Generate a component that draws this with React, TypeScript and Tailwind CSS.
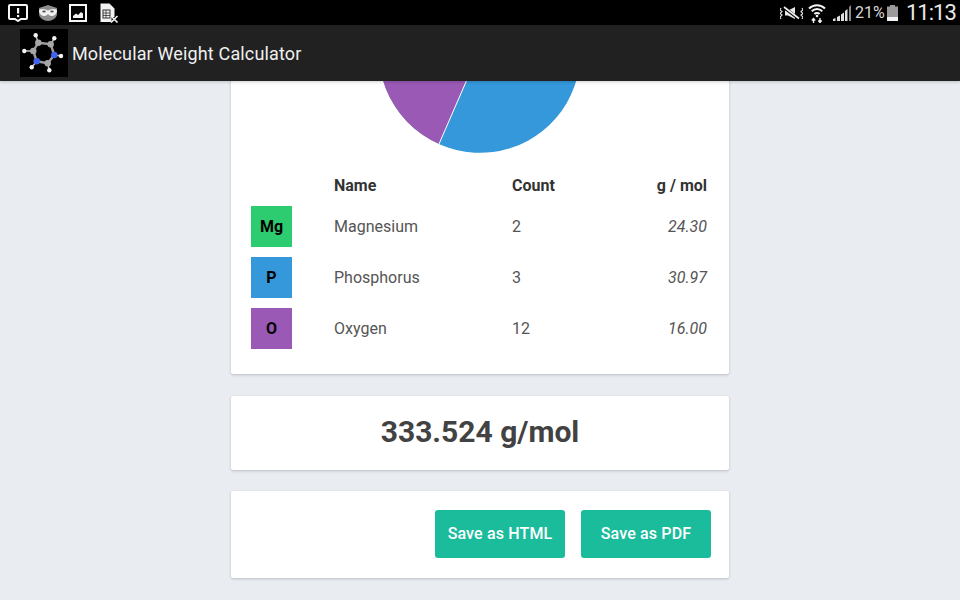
import React from "react";

const elements = [
	{ symbol: "Mg", name: "Magnesium", count: "2", weight: "24.30", color: "bg-[#2ecc71]" },
	{ symbol: "P", name: "Phosphorus", count: "3", weight: "30.97", color: "bg-[#3498db]" },
	{ symbol: "O", name: "Oxygen", count: "12", weight: "16.00", color: "bg-[#9b59b6]" },
];

const ringAtoms = [
	{ x: 18.3, y: 13.7, fill: "#a6a6a6" },
	{ x: 30.7, y: 15.3, fill: "#a6a6a6" },
	{ x: 34.3, y: 26, fill: "#3f63f0" },
	{ x: 27.7, y: 34.3, fill: "#a6a6a6" },
	{ x: 16.7, y: 32.3, fill: "#3f63f0" },
	{ x: 13.3, y: 22, fill: "#a6a6a6" },
];

// one hydrogen per ring atom, same order
const hydrogens = [
	{ x: 15.7, y: 6.3 },
	{ x: 34.3, y: 9.3 },
	{ x: 41, y: 27 },
	{ x: 29.3, y: 41.3 },
	{ x: 11.7, y: 38.3 },
	{ x: 4.3, y: 22 },
];

function MoleculeLogo() {
	return (
		<svg width="48" height="48" viewBox="0 0 48 48" className="bg-black shrink-0">
			{ringAtoms.map((a, i) => {
				const next = ringAtoms[(i + 1) % ringAtoms.length];
				return <line key={i} x1={a.x} y1={a.y} x2={next.x} y2={next.y} stroke="#9c9c9c" strokeWidth="2.4" />;
			})}
			{hydrogens.map((h, i) => (
				<line key={i} x1={h.x} y1={h.y} x2={ringAtoms[i].x} y2={ringAtoms[i].y} stroke="#c4c4c4" strokeWidth="1.5" />
			))}
			{ringAtoms.map((a, i) => (
				<circle key={i} cx={a.x} cy={a.y} r="3.2" fill={a.fill} />
			))}
			{hydrogens.map((h, i) => (
				<circle key={i} cx={h.x} cy={h.y} r="2.2" fill="#f4f4f4" />
			))}
		</svg>
	);
}

function StatusLeftIcons() {
	return (
		<div className="flex items-center">
			{/* Alert message */}
			<svg width="20" height="18" viewBox="0 0 20 18" className="ml-[8px]">
				<path d="M2 1h16a1 1 0 0 1 1 1v12a1 1 0 0 1-1 1h-5l-3 2-3-2H2a1 1 0 0 1-1-1V2a1 1 0 0 1 1-1z" fill="none" stroke="#f6f6f6" strokeWidth="2" />
				<rect x="9" y="4" width="2.2" height="5.5" fill="#f6f6f6" />
				<rect x="9" y="11" width="2.2" height="2.2" fill="#f6f6f6" />
			</svg>
			{/* Mask */}
			<svg width="20" height="18" viewBox="0 0 20 18" className="ml-[10px]">
				<path d="M1 4 10 1l9 3v6c0 4-5 7-9 7s-9-3-9-7z" fill="#8d8d8d" />
				<path d="M1 6c3-1.5 6-1 9 .5 3-1.500 6-2 9-.5 0 4-3 6-5.500 6-1.500 0-2.500-1-3.500-2-1 1-2 2-3.500 2C4 12 1 10 1 6z" fill="#f0f0f0" />
				<ellipse cx="6" cy="7.5" rx="1.8" ry="1" fill="#555" />
				<ellipse cx="14" cy="7.5" rx="1.8" ry="1" fill="#555" />
			</svg>
			{/* Picture */}
			<svg width="18" height="18" viewBox="0 0 18 18" className="ml-[11px]">
				<rect x="1" y="1" width="16" height="16" fill="none" stroke="#f6f6f6" strokeWidth="2" />
				<path d="M4 14v-2l3-2.500 2 1.500 3-3 2 1.500V14z" fill="#f2f2f2" />
			</svg>
			{/* Spreadsheet document with cross */}
			<svg width="19" height="20" viewBox="0 0 19 20" className="ml-[13px]">
				<path d="M.5.5h9l5 5V14h-3v5h-11z" fill="#f2f2f2" />
				<rect x="3" y="7" width="7" height="8" fill="none" stroke="#333" strokeWidth="1" />
				<path d="M3 10h7M3 12.500h7M6 7v8" stroke="#333" strokeWidth="0.8" />
				<path d="M11 13l6.500 6.500M17.500 13 11 19.500" stroke="#f2f2f2" strokeWidth="1.6" />
			</svg>
		</div>
	);
}

function StatusRight() {
	return (
		<div className="flex items-center">
			{/* Vibrate and mute */}
			<svg width="23" height="14" viewBox="0 0 23 14" className="mr-[5px]">
				<path d="M1 2 0 4l2 1.500L0 7.500 2 9 0 11l1 2M22 2l1 2-2 1.500 2 2L21 9l2 2-1 2" fill="none" stroke="#e0e0e0" strokeWidth="1.2" />
				<path d="M5 4.500h3L15 1v12L8 9.500H5z" fill="#e8e8e8" />
				<path d="M4 1.500 19 13" stroke="#000" strokeWidth="3" />
				<path d="M4 1 19 12.500" stroke="#f0f0f0" strokeWidth="1.6" />
			</svg>
			{/* Wifi with transfer arrows */}
			<svg width="18" height="21" viewBox="0 0 18 21" className="mr-[7px]">
				<path d="M1 6.500c4.500-4.500 11.500-4.500 16 0M3.700 9.300c3-3 7.600-3 10.600 0M6.400 12c1.500-1.500 3.700-1.500 5.200 0" fill="none" stroke="#f2f2f2" strokeWidth="2" />
				<circle cx="9" cy="14" r="1.3" fill="#f2f2f2" />
				<path d="M5.500 21v-4M3.800 18.500l1.700-2 1.700 2M12 16v4M10.300 18.500l1.700 2 1.700-2" fill="none" stroke="#f2f2f2" strokeWidth="1.4" />
			</svg>
			{/* Signal bars */}
			<svg width="18" height="16" viewBox="0 0 18 16" className="mr-[4px]">
				<path d="M0 16v-2l2.500-1v3z" fill="#e0e0e0" />
				<path d="M4 16v-4l3-1.500V16z" fill="#e0e0e0" />
				<path d="M8 16V9.500l3-2V16z" fill="#e0e0e0" />
				<path d="M12 16V6l2.500-2v12z" fill="#e0e0e0" />
				<path d="M16 16V2l2-2v16z" fill="#8a8a8a" />
			</svg>
			<span className="text-[16px] leading-none text-[#d8d8d8] w-[32px]">21%</span>
			{/* Battery */}
			<svg width="11" height="16" viewBox="0 0 11 16" className="mr-[8px]">
				<rect x="3" y="0" width="5" height="2" fill="#9a9a9a" />
				<rect x="0" y="1.5" width="11" height="10.5" fill="#9a9a9a" />
				<rect x="0" y="12" width="11" height="4" fill="#f2f2f2" />
			</svg>
			<span className="text-[22px] leading-none text-[#e8e8e8] tracking-[-1px] w-[50px] mr-[4px] mt-[1px]">11:13</span>
		</div>
	);
}

export default function App() {
	return (
		<div className="h-[600px] w-[960px] overflow-hidden flex flex-col bg-[#e9edf2] font-['Roboto',sans-serif]">
			{/* Status bar */}
			<div className="h-[25px] shrink-0 bg-black flex items-center justify-between">
				<StatusLeftIcons />
				<StatusRight />
			</div>

			{/* App bar */}
			<div className="relative z-10 h-[56px] shrink-0 bg-[#212121] flex items-center pl-[20px] gap-[4px] shadow-[0_1px_3px_rgba(0,0,0,0.2)]">
				<MoleculeLogo />
				<span className="text-[18px] text-[#f0f0f0] tracking-[0.15px]">Molecular Weight Calculator</span>
			</div>

			{/* Scrolled content */}
			<div className="flex-1 overflow-hidden">
				<div className="w-[498px] mx-auto -mt-[161px] flex flex-col gap-[21px]">
					<div className="bg-white rounded-[2px] shadow-[0_1px_3px_rgba(0,0,0,0.2)] pt-[31px] pb-[25px] mb-[1px] pl-[20px] pr-[22px]">
						<div className="flex justify-center mb-[21px]">
							<svg width="202" height="202" viewBox="0 0 202 202" className="block">
								<circle cx="101" cy="101" r="100" fill="#2ecc71" />
								<path d="M101 101 L61 193 A100 100 0 0 0 161 21 Z" fill="#3498db" />
								<path d="M101 101 L61 193 A100 100 0 0 1 10 60 Z" fill="#9b59b6" />
								<path d="M101 101 L61 193" stroke="#fff" strokeWidth="1" />
							</svg>
						</div>

						<div className="grid grid-cols-[83px_178px_1fr_auto] items-center text-[16px] text-[#333] font-bold h-[22px]">
							<span />
							<span>Name</span>
							<span>Count</span>
							<span>g / mol</span>
						</div>

						<div className="mt-[10px] flex flex-col gap-[10px]">
							{elements.map((el) => (
								<div key={el.symbol} className="grid grid-cols-[83px_178px_1fr_auto] items-center text-[16px] text-[#555]">
									<div className={`${el.color} w-[41px] h-[41px] flex items-center justify-center font-bold text-black`}>
										{el.symbol}
									</div>
									<span>{el.name}</span>
									<span>{el.count}</span>
									<span className="italic">{el.weight}</span>
								</div>
							))}
						</div>
					</div>

					<div className="bg-white rounded-[2px] shadow-[0_1px_3px_rgba(0,0,0,0.2)] h-[74px] pb-[3px] flex items-center justify-center">
						<span className="text-[30px] font-bold text-[#424242]">333.524 g/mol</span>
					</div>

					<div className="bg-white rounded-[2px] shadow-[0_1px_3px_rgba(0,0,0,0.2)] h-[87px] flex items-start justify-end gap-[16px] pt-[19px] pr-[18px]">
						<button className="w-[130px] h-[48px] bg-[#1abc9c] rounded-[3px] text-white text-[16px] font-medium tracking-[0.15px]">
							Save as HTML
						</button>
						<button className="w-[130px] h-[48px] bg-[#1abc9c] rounded-[3px] text-white text-[16px] font-medium tracking-[0.15px]">
							Save as PDF
						</button>
					</div>
				</div>
			</div>
		</div>
	);
}
